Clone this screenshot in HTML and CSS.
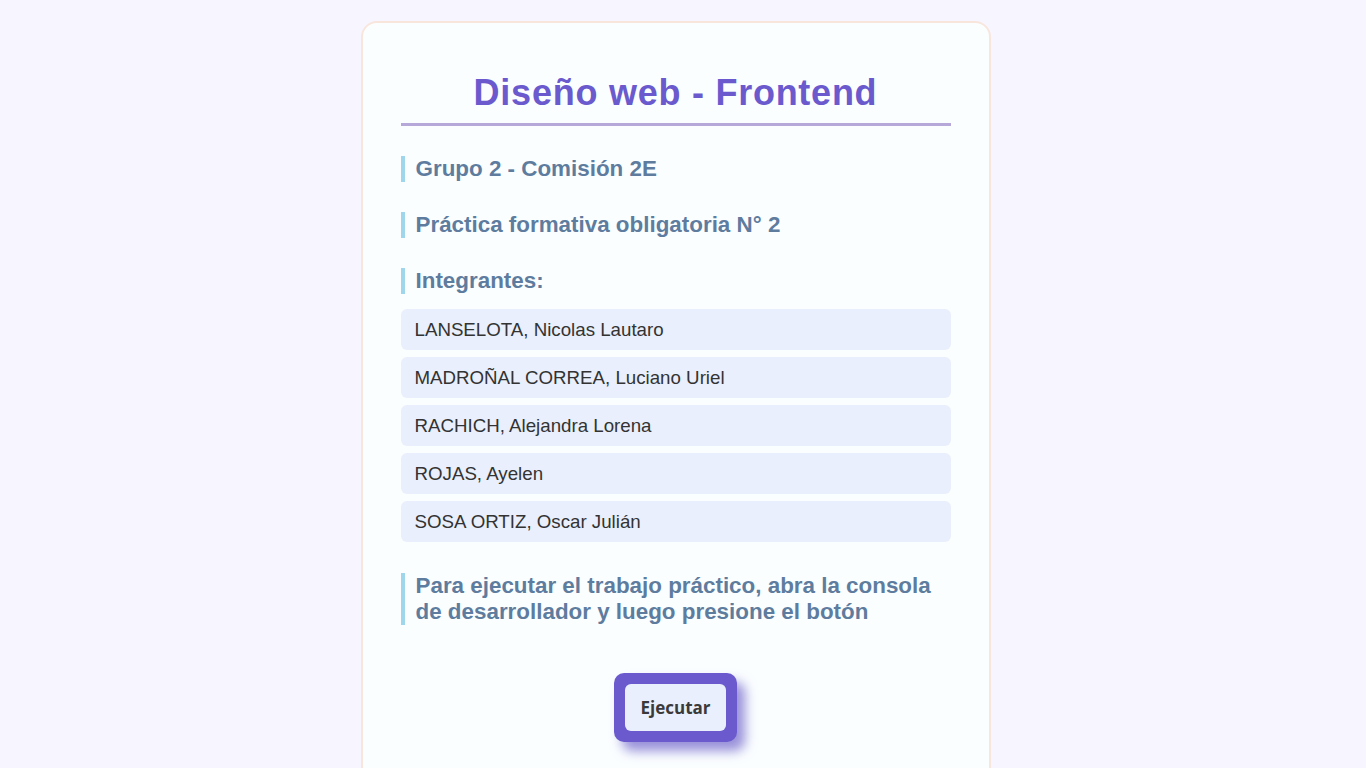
FILE: index.html
```html
<!DOCTYPE html>
<html lang="es">
<head>
<meta charset="utf-8">
<title>Diseño web - Frontend</title>
<link rel="stylesheet" href="styles.css">
</head>
<body>
<main class="card">
  <h1 class="title">Diseño web - Frontend</h1>
  <h2 class="heading">Grupo 2 - Comisión 2E</h2>
  <h2 class="heading">Práctica formativa obligatoria N° 2</h2>
  <h2 class="heading">Integrantes:</h2>
  <ul class="members">
    <li class="member">LANSELOTA, Nicolas Lautaro</li>
    <li class="member">MADROÑAL CORREA, Luciano Uriel</li>
    <li class="member">RACHICH, Alejandra Lorena</li>
    <li class="member">ROJAS, Ayelen</li>
    <li class="member">SOSA ORTIZ, Oscar Julián</li>
  </ul>
  <h2 class="heading heading-note">Para ejecutar el trabajo práctico, abra la consola de desarrollador y luego presione el botón</h2>
  <div class="actions">
    <button class="run-btn" type="button"><span class="run-btn-label">Ejecutar</span></button>
  </div>
</main>
</body>
</html>
```
FILE: styles.css
```css
html {
  overflow-y: scroll;
}
html, body {
  margin: 0;
  padding: 0;
}
body {
  background: #f7f5ff;
  font-family: "Liberation Sans", Arial, sans-serif;
  padding: 21px 15px 40px 0;
}
.card {
  box-sizing: border-box;
  width: 630px;
  margin: 0 auto;
  background: #fbfeff;
  border: 2px solid #f8e6dd;
  border-radius: 16px;
  padding: 49px 38px 58px;
}
.title {
  margin: 0;
  font-size: 36px;
  line-height: 41px;
  font-weight: bold;
  letter-spacing: 0.75px;
  color: #6a5acd;
  text-align: center;
  padding-bottom: 10px;
  border-bottom: 3px solid #b6a8d8;
}
.heading {
  margin: 30px 0 0;
  font-size: 22.4px;
  line-height: 26px;
  font-weight: bold;
  color: #5e7c9e;
  border-left: 4px solid #a0d6ec;
  padding-left: 11px;
}
.members {
  list-style: none;
  margin: 15px 0 0;
  padding: 0;
  display: flex;
  flex-direction: column;
  gap: 7px;
}
.member {
  background: #e9effc;
  border-radius: 6px;
  padding: 0 14px;
  height: 41px;
  line-height: 41px;
  font-size: 18.72px;
  color: #333;
}
.heading-note {
  margin-top: 31px;
}
.actions {
  display: flex;
  justify-content: center;
  margin-top: 48px;
}
.run-btn {
  display: flex;
  padding: 11px;
  border: 0;
  border-radius: 10px;
  background: #6a5acd;
  box-shadow: 8px 9px 12px rgba(98, 84, 196, 0.65);
  cursor: pointer;
}
.run-btn-label {
  display: block;
  font-family: "Open Sans", sans-serif;
  font-weight: bold;
  font-size: 17px;
  line-height: 47px;
  color: #3a3a3a;
  background: #e9effc;
  border-radius: 6px;
  padding: 0 15px;
}
```
